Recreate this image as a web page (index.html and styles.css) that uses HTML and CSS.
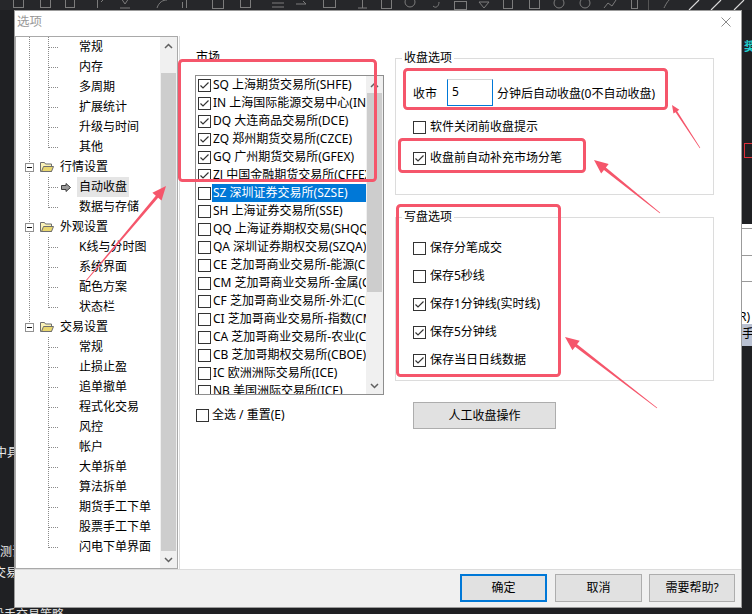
FILE: index.html
```html
<!DOCTYPE html>
<html lang="zh-CN">
<head>
<meta charset="utf-8">
<title>选项</title>
<link rel="stylesheet" href="styles.css">
</head>
<body>
<div class="desk">
  <div class="topbar">
    <svg width="752" height="10" viewBox="0 0 752 10">
      <g fill="none" stroke="#7c7c7c" stroke-width="1">
        <rect x="13.5" y="-4.5" width="10" height="12"/>
        <rect x="40.5" y="-4.5" width="10" height="12"/>
        <rect x="65.5" y="-4.5" width="9" height="12"/>
        <path d="M97.5 -2v10M101 2l3 -3M120 8h10"/>
        <path d="M121 -2l4 6 4-6"/>
        <path d="M157 8c2-6 6-8 10-8"/>
        <path d="M182.5 8v-6M186.5 8v-9"/>
        <rect x="212.5" y="-2.5" width="11" height="11"/>
        <rect x="240.5" y="-2.5" width="10" height="10"/>
        <path d="M272 3h12M272 7h12"/>
        <path d="M296 4h10l-3-3"/>
        <rect x="323.5" y="-1.5" width="12" height="9"/>
        <path d="M362.5 -2v10M358 8h9"/>
        <rect x="381.5" y="-1.5" width="10" height="10"/>
        <circle cx="410" cy="2" r="5"/>
        <path d="M433 6c3 3 6 0 6-4"/>
        <rect x="454.5" y="1.5" width="12" height="8"/>
        <path d="M479 2h10l-5 6z"/>
        <rect x="503.5" y="-3.5" width="9" height="12"/>
        <rect x="529.5" y="-1.5" width="10" height="10"/>
        <circle cx="559" cy="3" r="5"/>
        <circle cx="585" cy="3" r="5"/>
        <path d="M604 8l4-5 4 3 4-6"/>
        <rect x="631.5" y="-3.5" width="6" height="12"/>
        <path d="M664 8c2-4 5-10 9-10"/>
      </g>
      <path d="M648.5 0v10" stroke="#555"/>
      <path d="M689 10l10-10M711 10l10-10M734 10l10-10" stroke="#d8d8d8" stroke-width="1.2"/>
    </svg>
  </div>

  <div class="lstrip">
    <div class="bg-t t1">中具</div>
    <div class="bg-t t2">测试</div>
    <div class="bg-t t3">交易</div>
  </div>

  <div class="dialog">
    <div class="titlebar">
      <span class="title">选项</span>
      <svg class="close" width="10" height="10" viewBox="0 0 10 10"><path d="M0.5 0.5l9 9M9.5 0.5l-9 9" stroke="#8a8a8a" stroke-width="1" fill="none"/></svg>
    </div>

    <div class="main">
      <div class="tree">
        <div class="tree-rows">
          <div class="node"><i class="c0 v"></i><i class="c1 m"></i><i class="ico"></i><span class="lbl">常规</span></div>
          <div class="node"><i class="c0 v"></i><i class="c1 m"></i><i class="ico"></i><span class="lbl">内存</span></div>
          <div class="node"><i class="c0 v"></i><i class="c1 m"></i><i class="ico"></i><span class="lbl">多周期</span></div>
          <div class="node"><i class="c0 v"></i><i class="c1 m"></i><i class="ico"></i><span class="lbl">扩展统计</span></div>
          <div class="node"><i class="c0 v"></i><i class="c1 m"></i><i class="ico"></i><span class="lbl">升级与时间</span></div>
          <div class="node"><i class="c0 v"></i><i class="c1 l"></i><i class="ico"></i><span class="lbl">其他</span></div>

          <div class="node"><i class="c0 v"><i class="minus"></i></i><i class="c1"><svg class="folder" width="15" height="12" viewBox="0 0 15 12"><path d="M1.5 1.5h4l1 1.5h6v7.5h-11z" fill="#fbf3b8" stroke="#6e6e6e"/><path d="M2.5 10.5l2-5h10l-2 5z" fill="#e9d66e" stroke="#6e6e6e"/></svg></i><span class="lbl">行情设置</span></div>
          <div class="node"><i class="c0 v"></i><i class="c1 m"></i><i class="ico"><svg width="10" height="9" viewBox="0 0 10 9"><path d="M0.5 2.5h4.5v-2l4.5 4-4.5 4v-2h-4.5z" fill="#9a9a9a" stroke="#3c3c3c"/></svg></i><span class="lbl sel">自动收盘</span></div>
          <div class="node"><i class="c0 v"></i><i class="c1 l"></i><i class="ico"></i><span class="lbl">数据与存储</span></div>

          <div class="node"><i class="c0 v"><i class="minus"></i></i><i class="c1"><svg class="folder" width="15" height="12" viewBox="0 0 15 12"><path d="M1.5 1.5h4l1 1.5h6v7.5h-11z" fill="#fbf3b8" stroke="#6e6e6e"/><path d="M2.5 10.5l2-5h10l-2 5z" fill="#e9d66e" stroke="#6e6e6e"/></svg></i><span class="lbl">外观设置</span></div>
          <div class="node"><i class="c0 v"></i><i class="c1 m"></i><i class="ico"></i><span class="lbl">K线与分时图</span></div>
          <div class="node"><i class="c0 v"></i><i class="c1 m"></i><i class="ico"></i><span class="lbl">系统界面</span></div>
          <div class="node"><i class="c0 v"></i><i class="c1 m"></i><i class="ico"></i><span class="lbl">配色方案</span></div>
          <div class="node"><i class="c0 v"></i><i class="c1 l"></i><i class="ico"></i><span class="lbl">状态栏</span></div>

          <div class="node"><i class="c0 pl"><i class="minus"></i></i><i class="c1"><svg class="folder" width="15" height="12" viewBox="0 0 15 12"><path d="M1.5 1.5h4l1 1.5h6v7.5h-11z" fill="#fbf3b8" stroke="#6e6e6e"/><path d="M2.5 10.5l2-5h10l-2 5z" fill="#e9d66e" stroke="#6e6e6e"/></svg></i><span class="lbl">交易设置</span></div>
          <div class="node"><i class="c0"></i><i class="c1 m"></i><i class="ico"></i><span class="lbl">常规</span></div>
          <div class="node"><i class="c0"></i><i class="c1 m"></i><i class="ico"></i><span class="lbl">止损止盈</span></div>
          <div class="node"><i class="c0"></i><i class="c1 m"></i><i class="ico"></i><span class="lbl">追单撤单</span></div>
          <div class="node"><i class="c0"></i><i class="c1 m"></i><i class="ico"></i><span class="lbl">程式化交易</span></div>
          <div class="node"><i class="c0"></i><i class="c1 m"></i><i class="ico"></i><span class="lbl">风控</span></div>
          <div class="node"><i class="c0"></i><i class="c1 m"></i><i class="ico"></i><span class="lbl">帐户</span></div>
          <div class="node"><i class="c0"></i><i class="c1 m"></i><i class="ico"></i><span class="lbl">大单拆单</span></div>
          <div class="node"><i class="c0"></i><i class="c1 m"></i><i class="ico"></i><span class="lbl">算法拆单</span></div>
          <div class="node"><i class="c0"></i><i class="c1 m"></i><i class="ico"></i><span class="lbl">期货手工下单</span></div>
          <div class="node"><i class="c0"></i><i class="c1 m"></i><i class="ico"></i><span class="lbl">股票手工下单</span></div>
          <div class="node"><i class="c0"></i><i class="c1 l"></i><i class="ico"></i><span class="lbl">闪电下单界面</span></div>
        </div>
        <div class="vscroll tree-sb">
          <div class="sb-btn"><svg width="9" height="6" viewBox="0 0 9 6"><path d="M1 5 4.5 1.5 8 5" fill="none" stroke="#606060" stroke-width="1.5"/></svg></div>
          <div class="sb-track"><div class="sb-thumb"></div></div>
          <div class="sb-btn"><svg width="9" height="6" viewBox="0 0 9 6"><path d="M1 1 4.5 4.5 8 1" fill="none" stroke="#606060" stroke-width="1.5"/></svg></div>
        </div>
      </div>

      <div class="pane">
        <div class="market">
          <div class="cap">市场</div>
          <div class="listbox">
            <div class="list-rows">
              <div class="item"><span class="cb on"><svg width="11" height="11" viewBox="0 0 11 11"><path d="M1.5 5.5 4 8 9.5 2.5" fill="none" stroke="#333" stroke-width="1.2"/></svg></span><span class="itxt">SQ 上海期货交易所(SHFE)</span></div>
              <div class="item"><span class="cb on"><svg width="11" height="11" viewBox="0 0 11 11"><path d="M1.5 5.5 4 8 9.5 2.5" fill="none" stroke="#333" stroke-width="1.2"/></svg></span><span class="itxt">IN 上海国际能源交易中心(INE)</span></div>
              <div class="item"><span class="cb on"><svg width="11" height="11" viewBox="0 0 11 11"><path d="M1.5 5.5 4 8 9.5 2.5" fill="none" stroke="#333" stroke-width="1.2"/></svg></span><span class="itxt">DQ 大连商品交易所(DCE)</span></div>
              <div class="item"><span class="cb on"><svg width="11" height="11" viewBox="0 0 11 11"><path d="M1.5 5.5 4 8 9.5 2.5" fill="none" stroke="#333" stroke-width="1.2"/></svg></span><span class="itxt">ZQ 郑州期货交易所(CZCE)</span></div>
              <div class="item"><span class="cb on"><svg width="11" height="11" viewBox="0 0 11 11"><path d="M1.5 5.5 4 8 9.5 2.5" fill="none" stroke="#333" stroke-width="1.2"/></svg></span><span class="itxt">GQ 广州期货交易所(GFEX)</span></div>
              <div class="item"><span class="cb on"><svg width="11" height="11" viewBox="0 0 11 11"><path d="M1.5 5.5 4 8 9.5 2.5" fill="none" stroke="#333" stroke-width="1.2"/></svg></span><span class="itxt">ZJ 中国金融期货交易所(CFFEX)</span></div>
              <div class="item sel"><span class="cb"></span><span class="itxt">SZ 深圳证券交易所(SZSE)</span></div>
              <div class="item"><span class="cb"></span><span class="itxt">SH 上海证券交易所(SSE)</span></div>
              <div class="item"><span class="cb"></span><span class="itxt">QQ 上海证券期权交易(SHQQ)</span></div>
              <div class="item"><span class="cb"></span><span class="itxt">QA 深圳证券期权交易(SZQA)</span></div>
              <div class="item"><span class="cb"></span><span class="itxt">CE 芝加哥商业交易所-能源(CME)</span></div>
              <div class="item"><span class="cb"></span><span class="itxt">CM 芝加哥商业交易所-金属(CME)</span></div>
              <div class="item"><span class="cb"></span><span class="itxt">CF 芝加哥商业交易所-外汇(CME)</span></div>
              <div class="item"><span class="cb"></span><span class="itxt">CI 芝加哥商业交易所-指数(CME)</span></div>
              <div class="item"><span class="cb"></span><span class="itxt">CA 芝加哥商业交易所-农业(CME)</span></div>
              <div class="item"><span class="cb"></span><span class="itxt">CB 芝加哥期权交易所(CBOE)</span></div>
              <div class="item"><span class="cb"></span><span class="itxt">IC 欧洲洲际交易所(ICE)</span></div>
              <div class="item"><span class="cb"></span><span class="itxt">NB 美国洲际交易所(ICE)</span></div>
            </div>
            <div class="vscroll list-sb">
              <div class="sb-btn"><svg width="9" height="6" viewBox="0 0 9 6"><path d="M1 5 4.5 1.5 8 5" fill="none" stroke="#606060" stroke-width="1.5"/></svg></div>
              <div class="sb-track"><div class="sb-thumb"></div></div>
              <div class="sb-btn"><svg width="9" height="6" viewBox="0 0 9 6"><path d="M1 1 4.5 4.5 8 1" fill="none" stroke="#606060" stroke-width="1.5"/></svg></div>
            </div>
          </div>
          <label class="chk all"><span class="cb"></span><span>全选 / 重置(E)</span></label>
        </div>

        <div class="opts">
          <fieldset class="grp g1">
            <legend>收盘选项</legend>
            <div class="closerow"><span>收市</span><input class="edit" type="text" value="5"><span>分钟后自动收盘(0不自动收盘)</span></div>
            <label class="chk c-a"><span class="cb"></span><span>软件关闭前收盘提示</span></label>
            <label class="chk c-b"><span class="cb on"><svg width="11" height="11" viewBox="0 0 11 11"><path d="M1.5 5.5 4 8 9.5 2.5" fill="none" stroke="#333" stroke-width="1.2"/></svg></span><span>收盘前自动补充市场分笔</span></label>
          </fieldset>
          <fieldset class="grp g2">
            <legend>写盘选项</legend>
            <label class="chk"><span class="cb"></span><span>保存分笔成交</span></label>
            <label class="chk"><span class="cb"></span><span>保存5秒线</span></label>
            <label class="chk"><span class="cb on"><svg width="11" height="11" viewBox="0 0 11 11"><path d="M1.5 5.5 4 8 9.5 2.5" fill="none" stroke="#333" stroke-width="1.2"/></svg></span><span>保存1分钟线(实时线)</span></label>
            <label class="chk"><span class="cb on"><svg width="11" height="11" viewBox="0 0 11 11"><path d="M1.5 5.5 4 8 9.5 2.5" fill="none" stroke="#333" stroke-width="1.2"/></svg></span><span>保存5分钟线</span></label>
            <label class="chk"><span class="cb on"><svg width="11" height="11" viewBox="0 0 11 11"><path d="M1.5 5.5 4 8 9.5 2.5" fill="none" stroke="#333" stroke-width="1.2"/></svg></span><span>保存当日日线数据</span></label>
          </fieldset>
          <button class="btn manual" type="button">人工收盘操作</button>
        </div>
      </div>
    </div>

    <div class="btnbar">
      <button class="btn ok" type="button">确定</button>
      <button class="btn b2" type="button">取消</button>
      <button class="btn b3" type="button">需要帮助?</button>
    </div>
  </div>

  <div class="rstrip">
    <div class="rs-cyan">奨</div>
    <div class="rs-red"></div>
    <div class="rs-panel">
      <div class="rp1"></div>
      <div class="rp2"></div>
      <div class="rp3"></div>
      <div class="rp-t">R)</div>
      <div class="rp-h">手</div>
    </div>
  </div>

  <div class="bstrip">股手交易策略</div>

  <svg class="annot" width="752" height="614" viewBox="0 0 752 614">
    <g fill="none" stroke="#f5566b" stroke-width="3">
      <rect x="179.5" y="60.5" width="196" height="120" rx="3"/>
      <rect x="404.5" y="69.5" width="262" height="39" rx="3"/>
      <rect x="399.5" y="139.5" width="185" height="32" rx="3"/>
      <rect x="397.5" y="205.5" width="162" height="170" rx="3"/>
    </g>
    <g fill="#f5566b">
      <polygon points="85.31,282.26 158.12,197.67 161.55,200.57 166,186 152.39,192.83 155.82,195.73 84.69,281.74"/>
      <polygon points="700.25,147.84 677.21,111.15 679.30,109.79 672,105 673.44,113.61 675.53,112.25 699.75,148.16"/>
      <polygon points="660.25,212.69 605.86,167.60 608.68,164.09 594,160 601.16,173.45 603.98,169.94 659.75,213.31"/>
      <polygon points="657.24,407.68 577.01,344.36 579.75,340.80 565,337 572.43,350.30 575.17,346.74 656.76,408.32"/>
    </g>
  </svg>
</div>
</body>
</html>
```

FILE: styles.css
```css
* { box-sizing: border-box; }
html, body { margin: 0; padding: 0; }
body {
  background: #1f2023;
  font-family: "Noto Sans", "Noto Sans CJK SC", sans-serif;
  font-size: 12px;
  color: #000;
}
i { font-style: normal; }

.desk {
  position: relative;
  width: 752px;
  height: 614px;
  overflow: hidden;
  display: grid;
  grid-template-columns: 14px 728px 10px;
  grid-template-rows: 10px 598px 6px;
}

/* ---------- background application ---------- */
.topbar { grid-column: 1 / 4; grid-row: 1; background: #26272a; overflow: hidden; }
.topbar svg { display: block; }

.lstrip {
  grid-column: 1; grid-row: 2;
  background: #1f2023;
  overflow: hidden;
  display: flex; flex-direction: column;
  padding-top: 436px;
  color: #e8e8e8;
  white-space: nowrap;
  line-height: 14px;
}
.bg-t { text-indent: -5px; }
.t2 { margin-top: 85px; text-indent: 0; }
.t3 { margin-top: 7px; text-indent: -6px; }

.rstrip {
  grid-column: 3; grid-row: 2;
  background: #1f2023;
  display: flex; flex-direction: column;
  overflow: hidden;
}
.rs-cyan { margin-top: 30px; height: 14px; line-height: 14px; color: #1fd0d0; font-weight: bold; white-space: nowrap; text-indent: 2px; }
.rs-red { margin-top: 89px; margin-left: 2px; height: 15px; border: 1px solid #e0303a; border-right: none; }
.rs-panel { margin-top: 66px; height: 122px; background: #fff; display: flex; flex-direction: column; }
.rp1 { height: 5px; border-bottom: 1px solid #9a9a9a; }
.rp2 { height: 27px; border-bottom: 1px solid #9a9a9a; }
.rp3 { height: 26px; border-bottom: 1px solid #9a9a9a; }
.rp-t { margin-top: 28px; line-height: 14px; text-indent: -3px; white-space: nowrap; }
.rp-h { flex: 1; background: #b9c1d2; line-height: 20px; text-indent: 0; }

.bstrip {
  grid-column: 1 / 4; grid-row: 3;
  background: #1f2023;
  color: #e0e0e0;
  overflow: hidden;
  white-space: nowrap;
  line-height: 13px;
  text-indent: -8px;
}

/* ---------- dialog ---------- */
.dialog {
  grid-column: 2; grid-row: 2;
  background: #fff;
  border: 1px solid #9b9b9b;
  display: flex; flex-direction: column;
}
.titlebar {
  height: 25px;
  display: flex; align-items: flex-start; justify-content: space-between;
  padding: 3px 10px 0 2px;
}
.title { color: #9a9a9a; font-size: 12.5px; line-height: 16px; }
.close { margin-top: 3px; display: block; }

.main { height: 533px; display: flex; }

/* tree */
.tree { width: 163px; flex: none; border: 1px solid #a9a9a9; display: flex; overflow: hidden; }
.tree-rows { flex: 1; min-width: 0; overflow: hidden; }
.node { display: flex; height: 20px; align-items: center; white-space: nowrap; }
.c0 { width: 22px; height: 20px; flex: none; display: flex; align-items: center; }
.c1 { width: 20px; height: 20px; flex: none; display: flex; align-items: center; }
.ico { width: 19px; height: 20px; flex: none; display: flex; align-items: center; padding-left: 3px; }
.lbl { padding: 0 2px; line-height: 20px; }
.lbl.sel { background: #e5e5e5; }

.c0.v {
  background: repeating-linear-gradient(to bottom, #8a8a8a 0 1px, transparent 1px 2px) 13px 0 / 1px 20px no-repeat;
}
.c0.pl {
  background: repeating-linear-gradient(to bottom, #8a8a8a 0 1px, transparent 1px 2px) 13px 0 / 1px 10px no-repeat;
}
.c1.m {
  background:
    repeating-linear-gradient(to bottom, #8a8a8a 0 1px, transparent 1px 2px) 10px 0 / 1px 20px no-repeat,
    repeating-linear-gradient(to right, #8a8a8a 0 1px, transparent 1px 2px) 11px 10px / 9px 1px no-repeat;
}
.c1.l {
  background:
    repeating-linear-gradient(to bottom, #8a8a8a 0 1px, transparent 1px 2px) 10px 0 / 1px 11px no-repeat,
    repeating-linear-gradient(to right, #8a8a8a 0 1px, transparent 1px 2px) 11px 10px / 9px 1px no-repeat;
}
.minus {
  width: 9px; height: 9px; margin-left: 9px;
  border: 1px solid #919191;
  background: linear-gradient(#111, #111) center / 5px 1px no-repeat, #fff;
}
.folder { display: block; margin-left: 1px; }

/* scrollbars */
.vscroll { width: 17px; flex: none; background: #f0f0f0; display: flex; flex-direction: column; }
.sb-btn { height: 17px; flex: none; display: flex; align-items: center; justify-content: center; }
.sb-btn svg { display: block; }
.sb-track { flex: 1; display: flex; flex-direction: column; }
.sb-thumb { background: #cdcdcd; margin: 0 1px; }
.tree-sb .sb-track { padding-top: 19px; }
.tree-sb .sb-thumb { flex: 1; }
.list-sb .sb-thumb { height: 199px; }

/* pane */
.pane {
  flex: 1;
  margin-left: 1px;
  border-left: 1px solid #dcdcdc;
  display: flex;
  padding-left: 15px;
  gap: 11px;
}
.market { width: 189px; flex: none; padding-top: 13px; display: flex; flex-direction: column; align-items: flex-start; }
.cap { line-height: 16px; margin-left: 1px; }
.listbox { margin-top: 10px; width: 189px; height: 320px; border: 1px solid #8e8e8e; display: flex; }
.list-rows { flex: 1; min-width: 0; overflow: hidden; }
.item { height: 18px; display: flex; align-items: center; padding-left: 2px; white-space: nowrap; }
.item .cb { margin-right: 1px; }
.itxt { flex: 1; min-width: 0; padding-left: 1px; line-height: 18px; overflow: hidden; }
.item.sel .itxt { background: #0078d7; color: #fff; }

.cb {
  width: 13px; height: 13px; flex: none;
  border: 1px solid #333;
  background: #fff;
  display: inline-flex; align-items: center; justify-content: center;
}
.cb svg { display: block; }

.chk { display: flex; align-items: center; gap: 4px; height: 16px; line-height: 16px; white-space: nowrap; }
.chk.all { margin-top: 12px; margin-left: 1px; gap: 3px; }

.opts { width: 319px; flex: none; display: flex; flex-direction: column; align-items: flex-start; }
.grp {
  width: 319px; min-width: 0;
  margin: 0;
  border: 1px solid #dcdcdc;
  padding: 0 0 0 17px;
}
.grp legend { padding: 0 2px; margin-left: -11px; line-height: 16px; }
.g1 { margin-top: 14px; padding-top: 13px; padding-bottom: 28px; }
.closerow { height: 27px; display: flex; align-items: center; white-space: nowrap; }
.edit {
  width: 46px; height: 27px;
  margin: 0 4px 0 10px;
  border: 1px solid #0078d7;
  border-top-color: #d6d6d6;
  padding: 0 0 2px 4px;
  font: inherit;
  color: #000;
  outline: none;
  background: #fff;
}
.c-a { margin-top: 13px; }
.c-b { margin-top: 15px; }

.g2 { margin-top: 14px; padding-top: 15px; padding-bottom: 12px; }
.g2 .chk + .chk { margin-top: 12px; }

.btn {
  font: inherit;
  color: #000;
  background: #e1e1e1;
  border: 1px solid #adadad;
  padding: 0;
  line-height: 16px;
}
.manual { margin-top: 21px; margin-left: 18px; width: 143px; height: 27px; }

.btnbar {
  height: 38px;
  flex: none;
  border-top: 1px solid #dcdcdc;
  background: #f0f0f0;
  display: flex; justify-content: flex-end; align-items: flex-start;
  padding: 4px 6px 0 0;
}
.btnbar .btn { height: 28px; width: 87px; }
.btn.ok { border: 2px solid #0078d7; }
.btn.b2 { margin-left: 8px; }
.btn.b3 { margin-left: 7px; width: 86px; }

/* annotation overlay */
.annot { position: absolute; left: 0; top: 0; pointer-events: none; }
```
